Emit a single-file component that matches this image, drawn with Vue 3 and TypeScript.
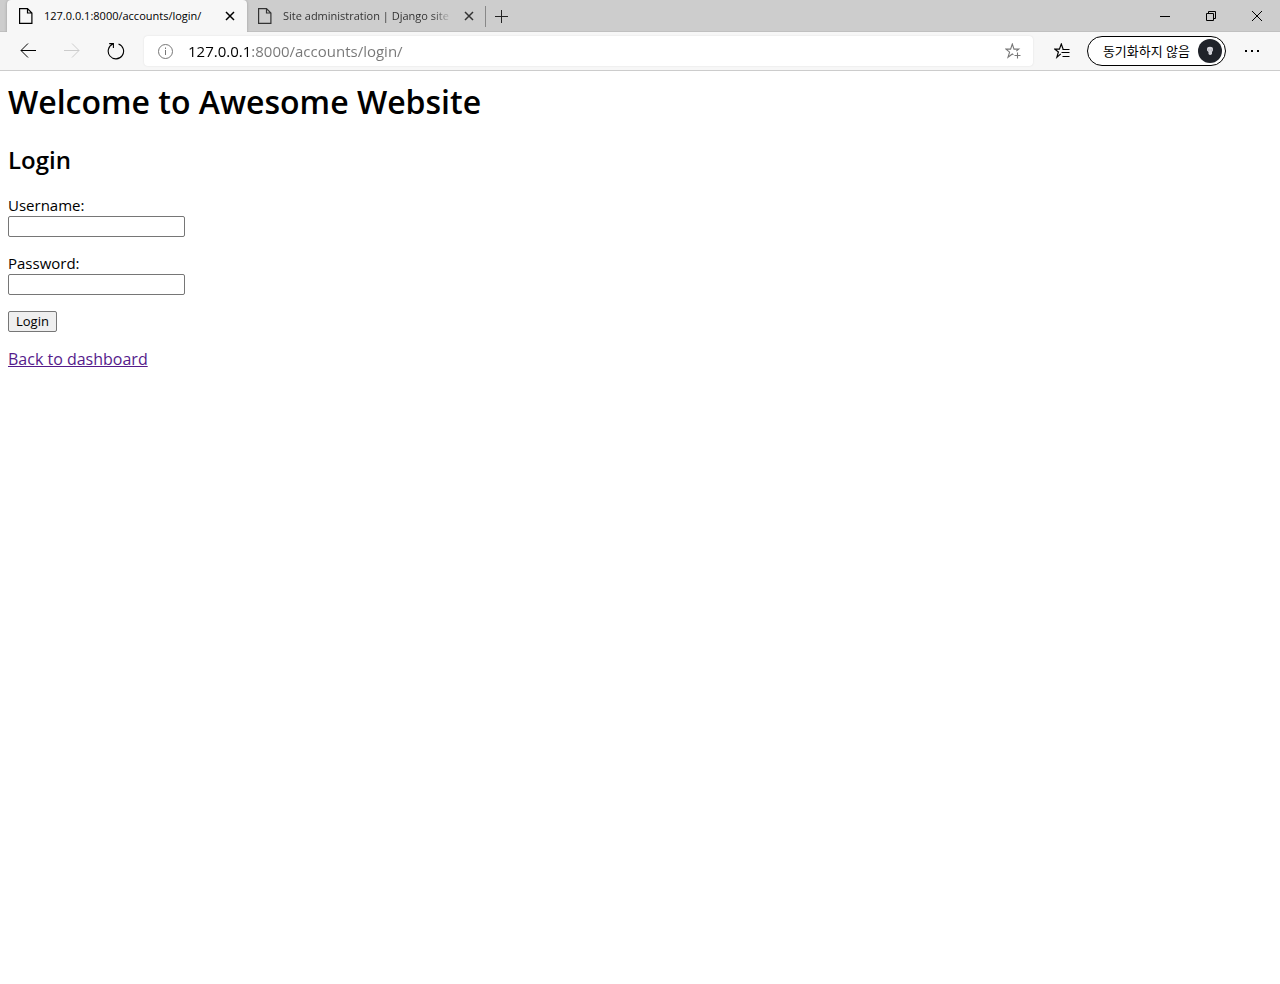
<script setup lang="ts">
import { ref } from 'vue'

interface Tab {
  id: number
  title: string
}

const tabs: Tab[] = [
  { id: 1, title: '127.0.0.1:8000/accounts/login/' },
  { id: 2, title: 'Site administration | Django site admin' },
]
const activeTab = ref(1)
const address = ref('127.0.0.1:8000/accounts/login/')
const username = ref('')
const password = ref('')
</script>

<template>
  <div class="browser">
    <header>
      <div class="tab-strip">
        <div v-for="tab in tabs" :key="tab.id" class="tab" :class="{ active: tab.id === activeTab }">
          <button class="tab-select" type="button" @click="activeTab = tab.id">
            <svg class="page-icon" width="14" height="16" viewBox="0 0 14 16" fill="none" stroke="currentColor">
              <path d="M.6.6H8.5L12.9 5V15.4H.6ZM8.5.6V5H12.9" stroke-width="1.2" />
            </svg>
            <span class="tab-title">{{ tab.title }}</span>
          </button>
          <button class="tab-close" type="button" aria-label="Close tab">
            <svg width="10" height="10" viewBox="0 0 10 10" fill="none" stroke="currentColor" stroke-width="1.5">
              <path d="M1 1L9 9M9 1L1 9" />
            </svg>
          </button>
        </div>
        <button class="new-tab" type="button" aria-label="New tab">
          <svg width="13" height="13" viewBox="0 0 13 13" fill="none" stroke="currentColor">
            <path d="M0 6.5H13M6.5 0V13" />
          </svg>
        </button>
        <div class="window-controls">
          <button type="button" aria-label="Minimize">
            <svg width="10" height="10" viewBox="0 0 10 10" fill="none" stroke="currentColor"><path d="M0 5.5H10" /></svg>
          </button>
          <button type="button" aria-label="Restore">
            <svg width="10" height="10" viewBox="0 0 10 10" fill="none" stroke="currentColor">
              <path d="M.5 2.5H7.5V9.5H.5ZM2.5 2.5V.5H9.5V7.5H7.5" />
            </svg>
          </button>
          <button type="button" aria-label="Close">
            <svg width="10" height="10" viewBox="0 0 10 10" fill="none" stroke="currentColor"><path d="M0 0L10 10M10 0L0 10" /></svg>
          </button>
        </div>
      </div>

      <nav class="toolbar">
        <button class="nav-button" type="button" aria-label="Back">
          <svg width="16" height="16" viewBox="0 0 16 16" fill="none" stroke="currentColor">
            <path d="M16 7.5H1M8 .5L1 7.5L8 14.5" />
          </svg>
        </button>
        <button class="nav-button" type="button" aria-label="Forward" disabled>
          <svg width="16" height="16" viewBox="0 0 16 16" fill="none" stroke="currentColor">
            <path d="M0 7.5H15M8 .5L15 7.5L8 14.5" />
          </svg>
        </button>
        <button class="nav-button" type="button" aria-label="Refresh">
          <svg width="18" height="18" viewBox="0 0 18 18" fill="none" stroke="currentColor" stroke-width="1.1">
            <path d="M11.5 1.9A7.7 7.7 0 1 1 5.8 2.1M2.2 1.6H6.4V6" />
          </svg>
        </button>
        <div class="address-bar">
          <button class="bar-icon" type="button" aria-label="Site information">
            <svg width="15" height="15" viewBox="0 0 15 15" fill="none" stroke="currentColor">
              <circle cx="7.5" cy="7.5" r="7" />
              <path d="M7.5 6V11M7.5 3.5V5" />
            </svg>
          </button>
          <input v-model="address" class="address" type="text" aria-label="Address" spellcheck="false" />
          <button class="bar-icon" type="button" aria-label="Add to favorites">
            <svg width="16" height="16" viewBox="0 0 16 16" fill="none" stroke="currentColor" stroke-width="1.1">
              <path d="M8.4 11.7L7.3 11L3 14.2L4.6 9.1L.9 6.1H5.6L7.3 1L9 6.1H13.8L11.3 8.2" />
              <path d="M12.5 9.5V15.5M9.5 12.5H15.5" />
            </svg>
          </button>
        </div>
        <button class="favorites" type="button" aria-label="Favorites">
          <svg width="16" height="16" viewBox="0 0 16 16" fill="none" stroke="currentColor" stroke-width="1.2">
            <path d="M6.8 10.9L2.9 14.2L4.4 9L.9 6.1H5.4L7.3 1L9.1 6.1" />
            <path d="M8.5 6.5H15.5M7.5 9.5H15.5M8.5 13.5H15.5" />
          </svg>
        </button>
        <button class="profile" type="button">
          <span>동기화하지 않음</span>
          <svg width="24" height="24" viewBox="0 0 24 24">
            <circle cx="12" cy="12" r="12" fill="#20232a" />
            <path d="M9 10Q9 7.8 12 7.8T15 10V11.5L14 13V15Q12 17 10.5 15V13L9 11.5Z" fill="#d3d3da" />
            <path d="M9.8 11H11.5M12.7 11H14.3" stroke="#a5a5ad" />
          </svg>
        </button>
        <button class="more" type="button" aria-label="Settings and more">
          <svg width="14" height="2" viewBox="0 0 14 2" fill="currentColor">
            <path d="M0 0H2V2H0ZM6 0H8V2H6ZM12 0H14V2H12Z" />
          </svg>
        </button>
      </nav>
    </header>

    <main>
      <h1>Welcome to Awesome Website</h1>
      <h2>Login</h2>
      <form @submit.prevent>
        <div class="field">
          <label for="username">Username:</label>
          <input id="username" v-model="username" type="text" />
        </div>
        <div class="field">
          <label for="password">Password:</label>
          <input id="password" v-model="password" type="password" />
        </div>
        <button class="submit" type="submit">Login</button>
      </form>
      <a href="#">Back to dashboard</a>
    </main>
  </div>
</template>

<style>
body {
  margin: 0;
  background: #fff;
}
</style>

<style scoped>
.browser {
  color: #000;
  font-family: "Open Sans", "Noto Sans CJK KR", sans-serif;
}
.browser * {
  box-sizing: border-box;
}
button {
  padding: 0;
  border: 0;
  background: none;
  color: inherit;
  font-family: inherit;
}
svg {
  display: block;
  flex: none;
}
.tab-strip {
  display: flex;
  align-items: center;
  height: 32px;
  padding-left: 7px;
  background: #cdcdcd;
  box-shadow: inset 0 -1px #c0c0c0;
}
.tab {
  display: flex;
  align-items: center;
  width: 238px;
  height: 32px;
  padding: 0 11px;
  color: #333;
}
.tab.active {
  width: 240px;
  padding: 0 12px;
  border-radius: 4px 4px 0 0;
  background: #f7f7f7;
  box-shadow: 0 0 3px #999;
  clip-path: inset(0 -3px 0 -3px);
  color: #000;
}
.tab-select {
  display: flex;
  flex: 1;
  align-items: center;
  gap: 11px;
  min-width: 0;
  height: 32px;
}
.tab-title {
  flex: 1;
  overflow: hidden;
  font-size: 11px;
  line-height: 20px;
  text-align: left;
  white-space: nowrap;
  mask-image: linear-gradient(to right, #000 calc(100% - 20px), transparent);
}
.tab.active .tab-title {
  mask-image: none;
}
.tab-close {
  margin-left: 12px;
}
.new-tab {
  padding: 4px 9px;
  border-left: 1px solid #888;
  color: #222;
}
.window-controls {
  display: flex;
  margin-left: auto;
}
.window-controls button {
  display: flex;
  align-items: center;
  justify-content: center;
  width: 46px;
  height: 28px;
}
.toolbar {
  display: flex;
  align-items: center;
  height: 39px;
  padding-left: 6px;
  border-bottom: 1px solid #ccc;
  background: #f7f7f7;
}
.nav-button {
  display: flex;
  align-items: center;
  justify-content: center;
  width: 44px;
  height: 30px;
}
.nav-button:disabled {
  color: #ccc;
}
.address-bar {
  display: flex;
  flex: 1;
  align-items: center;
  height: 30px;
  margin-left: 6px;
  padding: 0 12px 0 14px;
  border-radius: 4px;
  background: #fff;
  box-shadow: 0 0 2px #ddd;
}
.bar-icon {
  color: #777;
}
.address {
  flex: 1;
  min-width: 0;
  margin: 0 15px;
  padding: 0;
  border: 0;
  outline: 0;
  background: linear-gradient(to right, #000 62px, #767676 62px);
  background-clip: text;
  color: transparent;
  caret-color: #000;
  font-family: inherit;
  font-size: 15px;
  line-height: 22px;
}
.favorites {
  margin: 0 17px 0 21px;
}
.profile {
  display: flex;
  align-items: center;
  gap: 8px;
  height: 30px;
  padding: 0 3px 0 15px;
  border: 1px solid #000;
  border-radius: 15px;
  background: #fff;
  font-size: 13px;
  line-height: 20px;
}
.more {
  margin: 0 21px 0 19px;
}
main {
  padding: 8px;
}
h1,
h2 {
  margin: 0;
  font-weight: 600;
}
h1 {
  font-size: 32px;
  line-height: 46px;
}
h2 {
  margin: 19px 0;
  font-size: 24px;
  line-height: 32px;
}
.field {
  margin-bottom: 16px;
}
.field label {
  display: block;
  font-size: 15px;
  line-height: 21px;
}
.field input {
  display: block;
  width: 177px;
  height: 21px;
  padding: 1px 2px;
  border: 1px solid #767676;
  border-radius: 2px;
  background: #fff;
  font-family: inherit;
  font-size: 13px;
}
.submit {
  display: block;
  height: 21px;
  margin-bottom: 16px;
  padding: 0 7px;
  border: 1px solid #767676;
  border-radius: 2px;
  background: #efefef;
  font-size: 13px;
  line-height: 19px;
}
main a {
  color: #551a8b;
  font-size: 16px;
  line-height: 21px;
}
</style>
